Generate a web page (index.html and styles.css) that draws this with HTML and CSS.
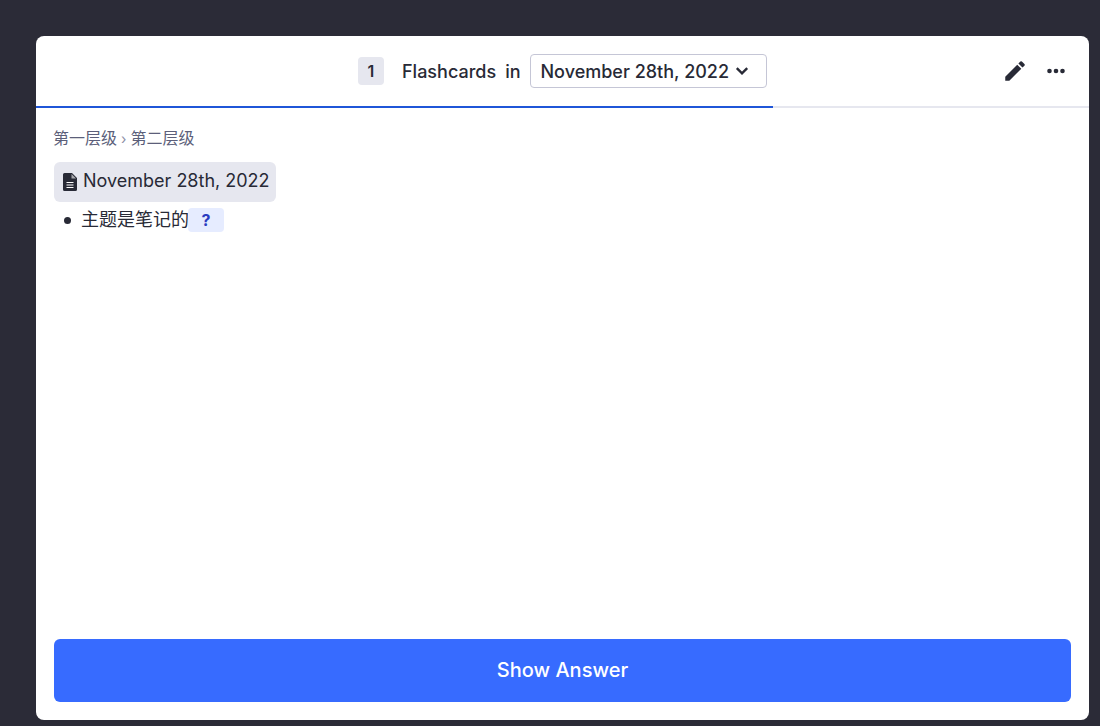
FILE: index.html
```html
<!DOCTYPE html>
<html lang="en">
<head>
    <meta charset="UTF-8">
    <meta name="viewport" content="width=device-width, initial-scale=1.0">
    <title>Flashcards</title>
    <link rel="stylesheet" href="styles.css">
</head>
<body>
    <div class="card">
        <div class="card-header">
            <div class="header-center">
                <span class="count">1</span>
                <span class="label">Flashcards</span>
                <span class="label-in">in</span>
                <div class="deck-select">
                    <span>November 28th, 2022</span>
                    <svg class="chevron" viewBox="0 0 16 16" width="16" height="16"><path d="M2.800 5.200 8 10.400l5.200-5.200" fill="none" stroke="#282a36" stroke-width="2.400"/></svg>
                </div>
            </div>
            <div class="header-actions">
                <svg class="icon-edit" viewBox="0 0 24 24" width="26" height="26"><path d="M3 17.250V21h3.750L17.810 9.940l-3.750-3.750L3 17.250zM20.710 7.040a1 1 0 0 0 0-1.410l-2.340-2.340a1 1 0 0 0-1.410 0l-1.830 1.830 3.750 3.750 1.830-1.830z" fill="#282a36"/></svg>
                <svg class="icon-more" viewBox="0 0 20 20" width="20" height="20"><circle cx="3.500" cy="10" r="2.300" fill="#282a36"/><circle cx="10" cy="10" r="2.300" fill="#282a36"/><circle cx="16.500" cy="10" r="2.300" fill="#282a36"/></svg>
            </div>
        </div>
        <div class="progress"><div class="progress-fill"></div></div>
        <div class="card-body">
            <div class="breadcrumb">第一层级<span class="sep">›</span>第二层级</div>
            <div class="page-title">
                <svg viewBox="0 0 14 18" width="14" height="18"><path d="M1.500 0H9l5 5v11.500a1.500 1.500 0 0 1-1.500 1.500h-11A1.500 1.500 0 0 1 0 16.500v-15A1.500 1.500 0 0 1 1.500 0z" fill="#282a36"/><path d="M8.500 1v4.500H13z" fill="#fff" fill-opacity="0.6"/><path d="M3.500 9.500h7M3.500 12h7M3.500 14.500h7" stroke="#fff" stroke-width="1.200"/></svg>
                <span>November 28th, 2022</span>
            </div>
            <ul class="blocks">
                <li>主题是笔记的<span class="cloze">?</span></li>
            </ul>
        </div>
        <div class="card-footer">
            <button class="show-answer">Show Answer</button>
        </div>
    </div>
</body>
</html>
```

FILE: styles.css
```css
* {
    box-sizing: border-box;
}

body {
    font-family: Inter, "Noto Sans CJK SC", sans-serif;
    color: #282a36;
    background-color: #2b2b37;
    height: 726px;
    margin: 0;
    padding: 36px 11px 6px 36px;
    overflow: hidden;
}

.card {
    display: flex;
    flex-direction: column;
    height: 684px;
    background-color: white;
    border-radius: 8px;
}

.card-header {
    display: flex;
    align-items: center;
    justify-content: space-between;
    height: 70px;
    padding: 0 23px 0 322px;
}

.header-center {
    display: flex;
    align-items: center;
    font-size: 18px;
    font-weight: 500;
}

.count {
    width: 26px;
    height: 28px;
    line-height: 28px;
    margin-right: 18px;
    font-size: 16px;
    font-weight: 600;
    text-align: center;
    background-color: #e6e7ef;
    border-radius: 4px;
}

.label {
    margin-right: 9px;
}

.label-in {
    margin-right: 9px;
}

.deck-select {
    display: flex;
    align-items: center;
    gap: 5px;
    width: 237px;
    height: 34px;
    padding-left: 10px;
    font-size: 18px;
    border: 1px solid #c5c6d6;
    border-radius: 4px;
}

.header-actions {
    display: flex;
    align-items: center;
    gap: 18px;
}

.progress {
    height: 2px;
    background-color: #e6e7ef;
}

.progress-fill {
    width: 737px;
    height: 2px;
    background-color: #1f56d8;
}

.card-body {
    flex: 1;
    padding: 20px 18px 0;
}

.breadcrumb {
    height: 20px;
    margin-left: -1px;
    line-height: 20px;
    font-size: 16px;
    color: #5c5f7a;
}

.sep {
    margin: 0 4px;
    font-size: 14px;
    color: #8a8da5;
}

.page-title {
    display: inline-flex;
    align-items: center;
    gap: 6px;
    height: 40px;
    margin-top: 14px;
    padding: 0 6px 3px 9px;
    font-size: 18px;
    background-color: #e6e7ef;
    border-radius: 6px;
}

.page-title svg {
    margin-top: 3px;
}

.blocks {
    margin: 6px 0 0;
    padding: 0 0 0 10px;
    font-size: 18px;
    line-height: 24px;
    list-style: none;
}

.blocks li::before {
    content: "";
    display: inline-block;
    width: 7px;
    height: 7px;
    margin-right: 10px;
    vertical-align: 2px;
    background-color: #282a36;
    border-radius: 50%;
}

.cloze {
    display: inline-block;
    width: 36px;
    height: 24px;
    margin-left: -1px;
    text-align: center;
    font-size: 16px;
    font-weight: 700;
    color: #2b3cc0;
    background-color: #e6ecff;
    border-radius: 4px;
    vertical-align: top;
}

.card-footer {
    padding: 0 18px 18px;
}

.show-answer {
    display: block;
    width: 100%;
    height: 63px;
    padding-bottom: 3px;
    font-family: Inter, sans-serif;
    font-size: 20px;
    font-weight: 500;
    color: white;
    background-color: #376bff;
    border: none;
    border-radius: 6px;
}
```
